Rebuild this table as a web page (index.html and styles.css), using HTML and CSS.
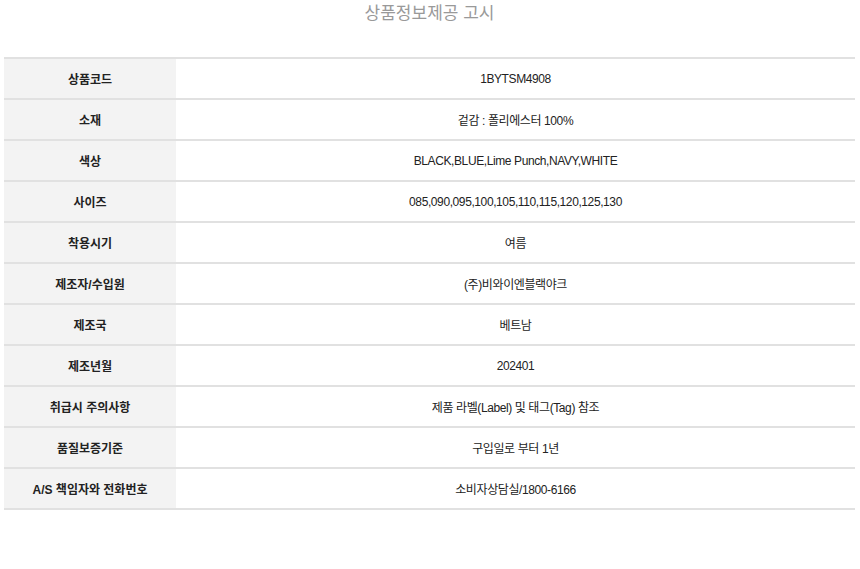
FILE: index.html
```html
<!DOCTYPE html>
<html lang="ko">
<head>
<meta charset="UTF-8">
<meta name="viewport" content="width=device-width, initial-scale=1.0">
<title>상품정보제공 고시</title>
<link rel="stylesheet" href="styles.css">
</head>
<body>
	<div class="notice">
		<h2 class="notice-title">상품정보제공 고시</h2>
		<table class="notice-table">
			<tr><th>상품코드</th><td>1BYTSM4908</td></tr>
			<tr><th>소재</th><td>겉감 : 폴리에스터 100%</td></tr>
			<tr><th>색상</th><td>BLACK,BLUE,Lime Punch,NAVY,WHITE</td></tr>
			<tr><th>사이즈</th><td>085,090,095,100,105,110,115,120,125,130</td></tr>
			<tr><th>착용시기</th><td>여름</td></tr>
			<tr><th>제조자/수입원</th><td>(주)비와이엔블랙야크</td></tr>
			<tr><th>제조국</th><td>베트남</td></tr>
			<tr><th>제조년월</th><td>202401</td></tr>
			<tr><th>취급시 주의사항</th><td>제품 라벨(Label) 및 태그(Tag) 참조</td></tr>
			<tr><th>품질보증기준</th><td>구입일로 부터 1년</td></tr>
			<tr><th>A/S 책임자와 전화번호</th><td>소비자상담실/1800-6166</td></tr>
		</table>
	</div>
</body>
</html>
```
FILE: styles.css
```css
body {
	margin: 0;
	padding: 0 5px 0 4px;
	background: #fff;
	font-family: "Liberation Sans", Arial, "Noto Sans CJK KR", sans-serif;
	color: #222;
}
.notice-title {
	margin: 0;
	padding-top: 1px;
	height: 57px;
	box-sizing: border-box;
	text-align: center;
	font-size: 17px;
	line-height: 26px;
	font-weight: normal;
	color: #999;
}
.notice-table {
	width: 100%;
	border-collapse: collapse;
	border-top: 2px solid #e1e1e1;
	font-size: 12px;
}
.notice-table th,
.notice-table td {
	height: 39px;
	padding: 0;
	text-align: center;
	border-bottom: 2px solid #e1e1e1;
}
.notice-table th {
	width: 172px;
	background: #f3f3f3;
	font-weight: bold;
	color: #222;
}
.notice-table td {
	color: #222;
	letter-spacing: -0.4px;
}
```
